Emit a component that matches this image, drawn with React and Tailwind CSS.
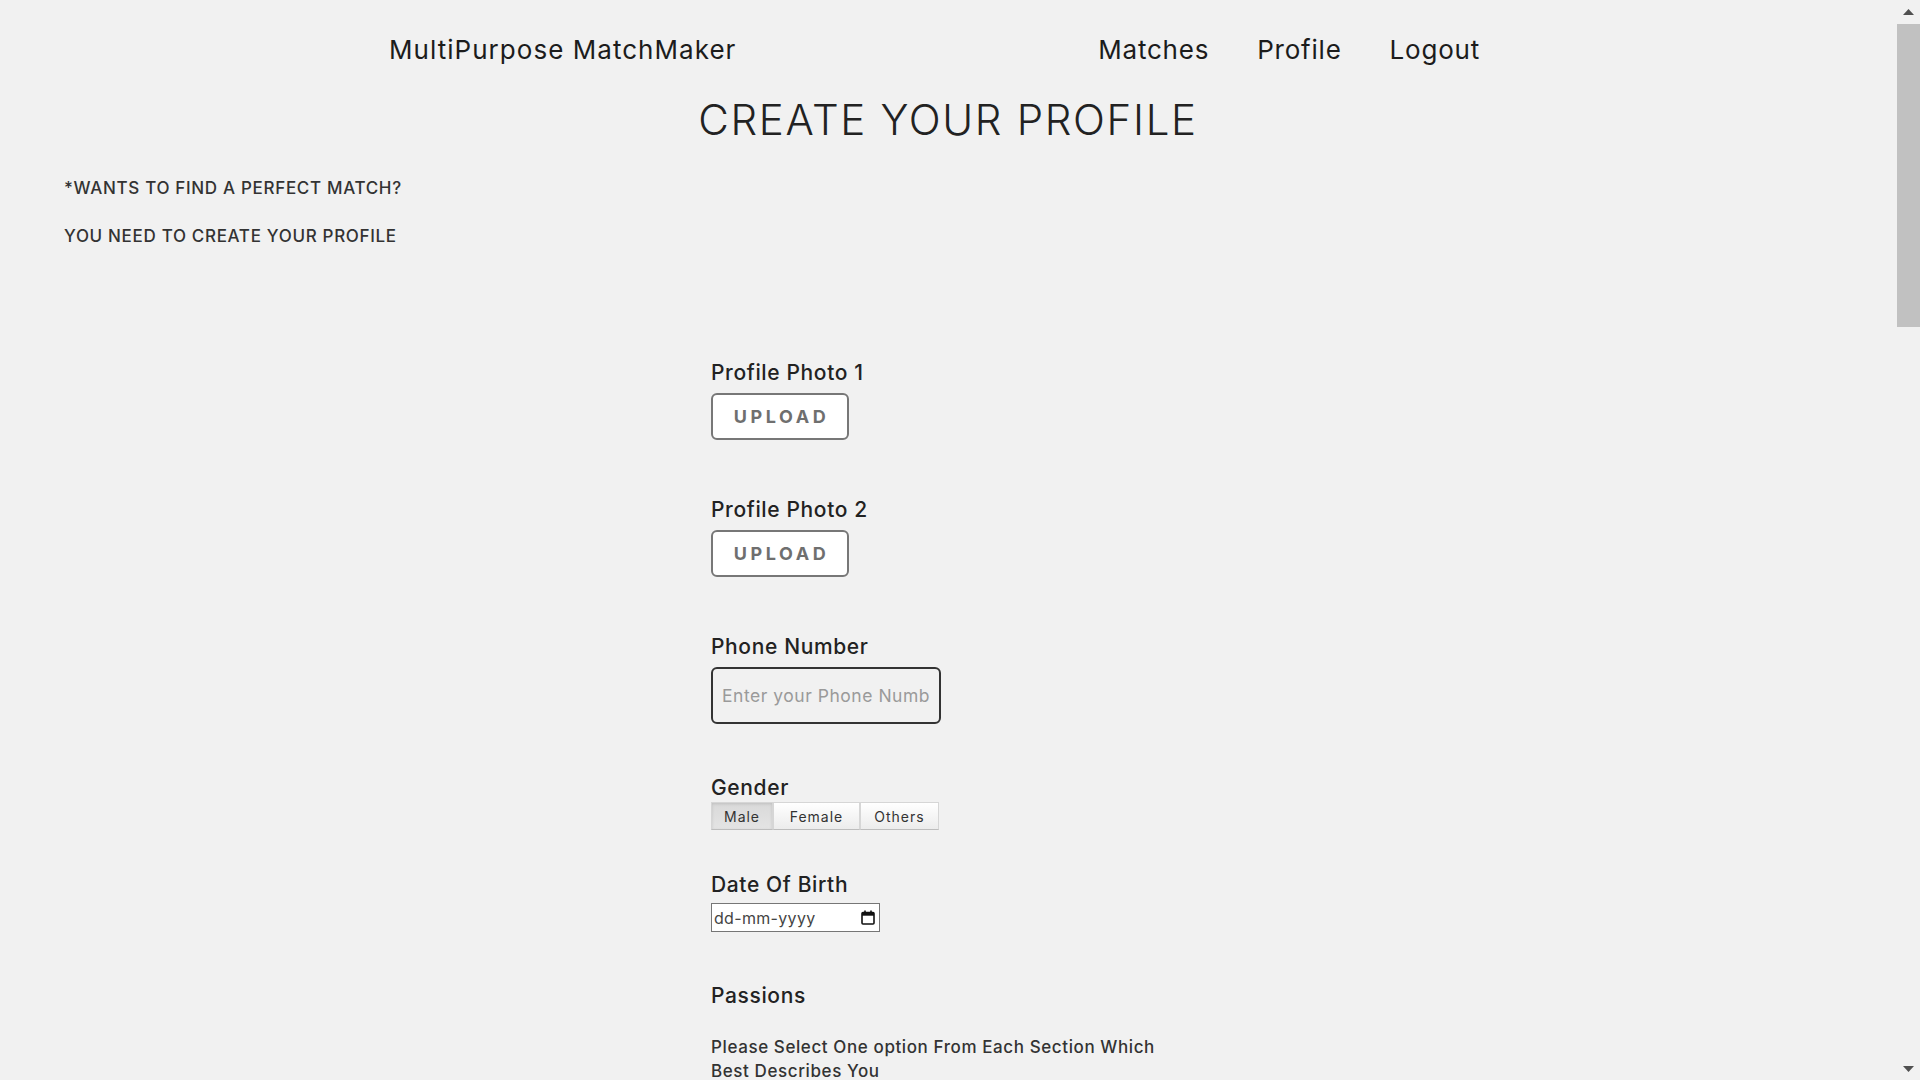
import { useState } from 'react'

const font = { fontFamily: 'Inter, "Liberation Sans", sans-serif' }

const Label = ({ children }) => (
  <p className="text-[21px] font-medium text-[#222] leading-[24px] tracking-[0.03em]">{children}</p>
)

const UploadField = ({ label }) => (
  <div className="flex flex-col gap-[8px]">
    <Label>{label}</Label>
    <button className="w-[138px] h-[47px] bg-white border-2 border-[#777] rounded-[6px] text-[18px] font-bold tracking-[0.2em] pl-[3px] text-[#6f6f6f]">
      UPLOAD
    </button>
  </div>
)

const CalendarGlyph = () => (
  <svg width="14" height="15" viewBox="0 0 14 15" fill="none">
    <rect x="1" y="2.5" width="12" height="11.5" rx="1" stroke="#111" strokeWidth="1.6" />
    <rect x="1" y="2.5" width="12" height="3.2" fill="#111" />
    <rect x="3.2" y="0.5" width="1.6" height="2.5" fill="#111" />
    <rect x="9.2" y="0.5" width="1.6" height="2.5" fill="#111" />
  </svg>
)

// fake window scrollbar, the page in the shot is scrolled to the top
const Scrollbar = () => (
  <aside className="w-[24px] h-screen shrink-0 flex flex-col bg-[#f1f1f1]">
    <div className="h-[23px] flex items-center justify-center">
      <svg width="11" height="6" viewBox="0 0 11 6"><path d="M5.5 0L11 6H0z" fill="#505050" /></svg>
    </div>
    <div className="ml-[1px] mt-[1px] h-[303px] bg-[#c1c1c1]" />
    <div className="flex-1" />
    <div className="h-[23px] flex items-center justify-center">
      <svg width="11" height="6" viewBox="0 0 11 6"><path d="M0 0H11L5.5 6z" fill="#505050" /></svg>
    </div>
  </aside>
)

export default function App() {
  const [gender, setGender] = useState('Male')

  return (
    <div className="h-screen overflow-hidden flex bg-[#f1f1f1] text-[#222]" style={font}>
      <main className="flex-1 min-w-0">
        <nav className="flex items-center h-[98px]">
          <span className="ml-[389px] text-[26px] tracking-[0.04em] text-[#1c1c1c]">MultiPurpose MatchMaker</span>
          <div className="ml-auto mr-[416px] flex gap-[48px] text-[26px] tracking-[0.03em] text-[#1c1c1c]">
            <a href="#">Matches</a>
            <a href="#">Profile</a>
            <a href="#">Logout</a>
          </div>
        </nav>

        <h1 className="-mt-[2px] text-center text-[42px] font-light tracking-[0.04em] text-[#222] leading-[48px]">
          CREATE YOUR PROFILE
        </h1>

        <div className="mt-[34px] ml-[64px] flex flex-col gap-[28px] text-[17px] font-medium tracking-[0.04em] text-[#333] leading-[20px]">
          <p>*WANTS TO FIND A PERFECT MATCH?</p>
          <p>YOU NEED TO CREATE YOUR PROFILE</p>
        </div>

        <form className="w-[474px] mx-auto mt-[115px] flex flex-col">
          <UploadField label="Profile Photo 1" />
          <div className="mt-[58px]">
            <UploadField label="Profile Photo 2" />
          </div>

          <div className="mt-[58px] flex flex-col gap-[8px]">
            <Label>Phone Number</Label>
            <input
              type="text"
              placeholder="Enter your Phone Number"
              className="w-[230px] h-[57px] px-[9px] bg-[#f1f1f1] border-2 border-[#333] rounded-[6px] text-[17.5px] tracking-[0.03em] placeholder:text-[#9a9a9a] outline-none"
            />
          </div>

          <div className="mt-[52px] flex flex-col gap-[2px]">
            <Label>Gender</Label>
            <div className="flex">
              {['Male', 'Female', 'Others'].map((g) => (
                <button
                  key={g}
                  type="button"
                  onClick={() => setGender(g)}
                  className={
                    'h-[28px] border border-[#d6d6d6] border-b-[#bdbdbd] text-[14px] tracking-[0.07em] text-[#333] ' +
                    (g === 'Male' ? 'w-[62px] ' : g === 'Female' ? 'w-[87px] ' : 'w-[79px] ') +
                    (gender === g
                      ? 'bg-gradient-to-b from-[#d9d9d9] to-[#e4e4e4] shadow-[inset_0_1px_3px_rgba(0,0,0,0.12)]'
                      : 'bg-gradient-to-b from-white to-[#ececec]')
                  }
                >
                  {g}
                </button>
              ))}
            </div>
          </div>

          <div className="mt-[43px] flex flex-col gap-[6px]">
            <Label>Date Of Birth</Label>
            <div className="w-[169px] h-[29px] pl-[2px] pr-[4px] flex items-center justify-between bg-white border border-[#767676]">
              <input
                type="text"
                placeholder="dd-mm-yyyy"
                className="w-[130px] bg-transparent text-[16px] tracking-[0.02em] text-[#444] placeholder:text-[#444] outline-none"
              />
              <CalendarGlyph />
            </div>
          </div>

          <div className="mt-[52px] flex flex-col gap-[27px]">
            <Label>Passions</Label>
            <p className="text-[17px] font-medium leading-[24px] tracking-[0.035em] text-[#333]">
              Please Select One option From Each Section Which Best Describes You
            </p>
          </div>
        </form>
      </main>
      <Scrollbar />
    </div>
  )
}
